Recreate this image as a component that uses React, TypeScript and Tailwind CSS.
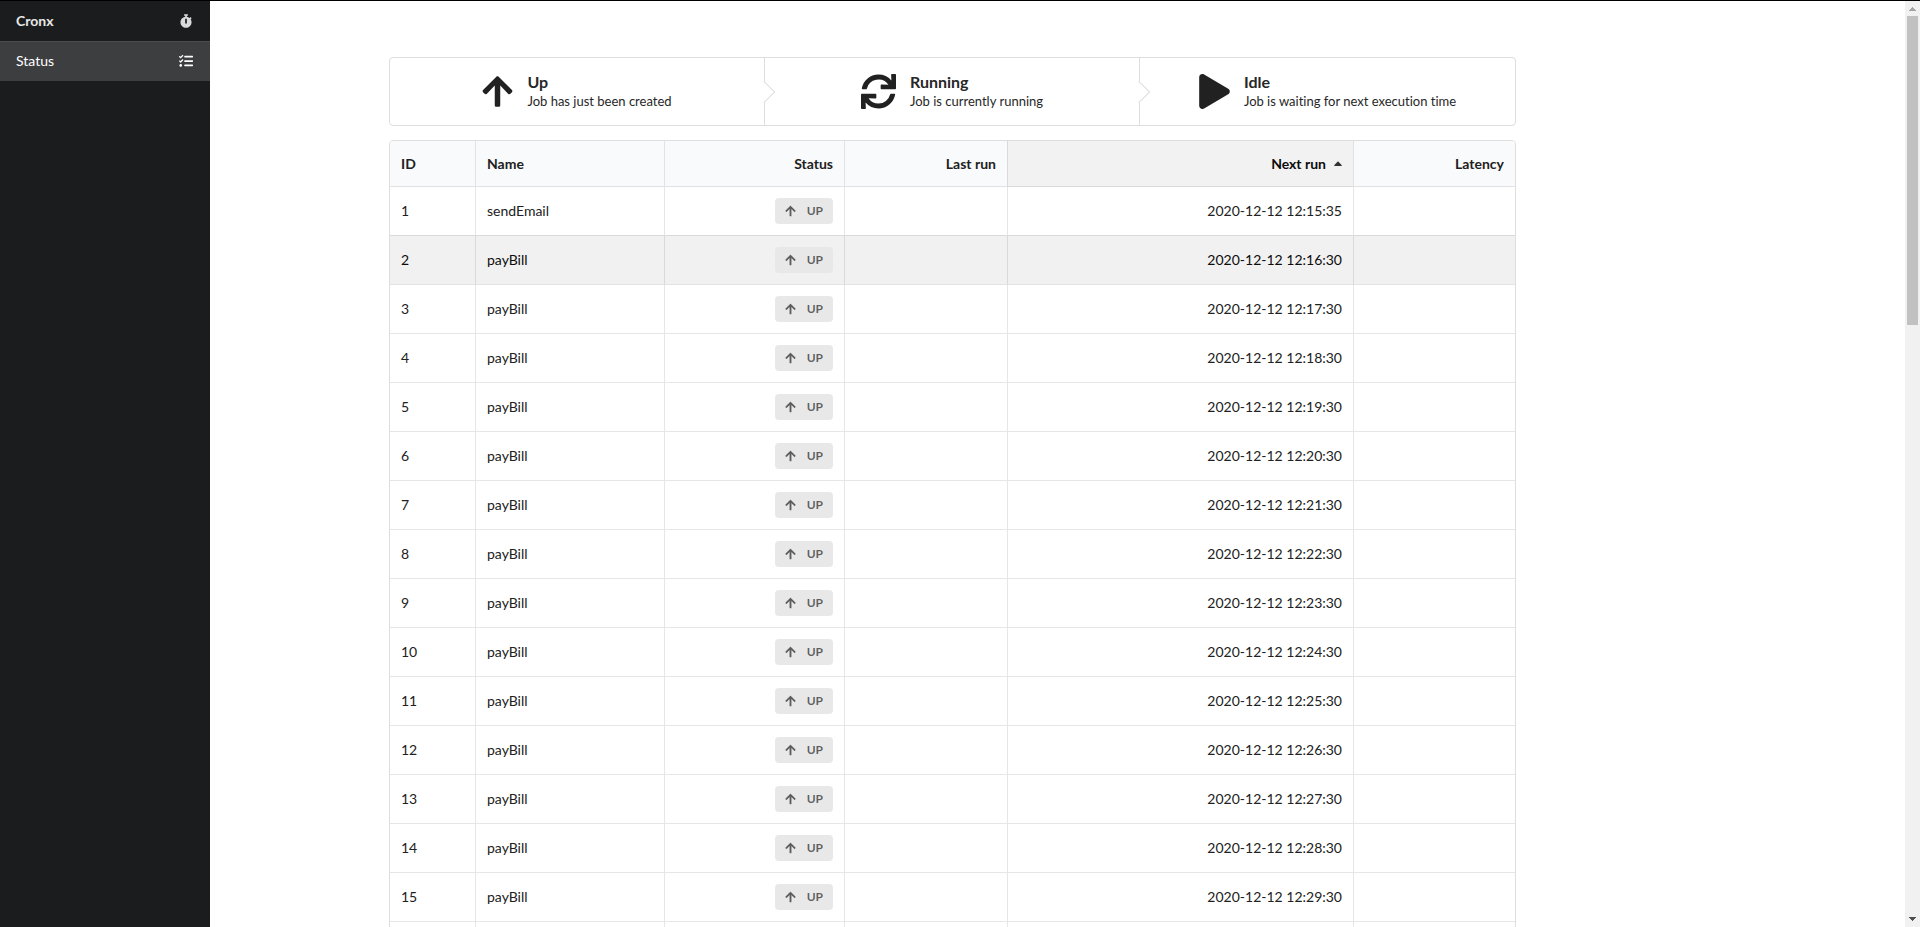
import React from "react";
import { FaArrowUp, FaPlay, FaStopwatch, FaSync, FaTasks } from "react-icons/fa";

type Job = { id: number; name: string; nextRun: string };

const jobs: Job[] = Array.from({ length: 15 }, (_, i) => ({
  id: i + 1,
  name: i === 0 ? "sendEmail" : "payBill",
  nextRun: i === 0 ? "2020-12-12 12:15:35" : `2020-12-12 12:${15 + i}:30`,
}));

const steps = [
  { title: "Up", text: "Job has just been created", icon: <FaArrowUp className="h-[35px] w-[31px]" /> },
  { title: "Running", text: "Job is currently running", icon: <FaSync className="h-[35px] w-[35px]" /> },
  { title: "Idle", text: "Job is waiting for next execution time", icon: <FaPlay className="h-[35px] w-[31px]" /> },
];

function Sidebar() {
  return (
    <nav className="w-[210px] shrink-0 bg-[#1b1c1d] text-sm leading-[14px]">
      <a href="#home" className="flex h-10 items-center justify-between px-4 font-bold text-white/90">
        Cronx
        <FaStopwatch className="mr-0.5 h-[14px] w-3 text-[#d9dada]" />
      </a>
      <a
        href="#status"
        aria-current="page"
        className="flex h-10 items-center justify-between border-t border-[#4b4c4d] bg-[#3d3e3f] px-4 pb-0.5 text-white"
      >
        Status
        <FaTasks className="mr-px h-[14px] w-[14px]" />
      </a>
    </nav>
  );
}

function Steps() {
  return (
    <ol className="grid grid-cols-3 rounded border border-[#dededf]">
      {steps.map((step, i) => (
        <li
          key={step.title}
          className="relative flex h-[67px] items-center justify-center gap-[14px] border-r border-[#dededf] text-[#212121] last:border-r-0"
        >
          {step.icon}
          <div className="pb-0.5 text-[#272727]">
            <div className="text-base leading-[18px] font-bold">{step.title}</div>
            <div className="mt-0.5 text-[13px] leading-4">{step.text}</div>
          </div>
          {i < steps.length - 1 && (
            <span className="absolute top-1/2 right-0 z-10 h-4 w-4 translate-x-1/2 -translate-y-1/2 -rotate-45 border-r border-b border-[#dededf] bg-white" />
          )}
        </li>
      ))}
    </ol>
  );
}

function StatusLabel() {
  return (
    <span className="inline-flex h-[26px] items-center gap-[11px] rounded bg-[#e8e8e8] px-[10px] align-middle text-xs leading-3 font-bold text-black/60">
      <FaArrowUp className="h-3 w-[11px]" />
      UP
    </span>
  );
}

const head = "border-b border-l border-[#e1e2e3] bg-[#f9fafb] px-[11px] font-bold first:border-l-0";

function JobTable() {
  return (
    <div className="overflow-hidden rounded border border-[#dededf]">
      <table className="w-full table-fixed border-separate border-spacing-0 text-right text-sm text-[#212121]">
        <colgroup>
          <col className="w-[85px]" />
          <col className="w-[189px]" />
          <col className="w-[180px]" />
          <col className="w-[163px]" />
          <col className="w-[346px]" />
          <col className="w-[162px]" />
        </colgroup>
        <thead>
          <tr className="h-[46px]">
            <th className={`${head} text-left`}>ID</th>
            <th className={`${head} text-left`}>Name</th>
            <th className={head}>Status</th>
            <th className={head}>Last run</th>
            <th aria-sort="ascending" className="border-b border-l border-[#dadada] bg-[#f2f2f2] px-[11px] font-bold text-[#0c0c0c]">
              <span className="inline-flex items-center gap-2">
                Next run
                <svg viewBox="0 0 8 5" className="h-[5px] w-2" fill="#333" aria-hidden="true">
                  <path d="M4 0.2 7.8 4.2Q8 5 7.2 5H0.8Q0 5 0.2 4.2Z" />
                </svg>
              </span>
            </th>
            <th className={head}>Latency</th>
          </tr>
        </thead>
        <tbody>
          {jobs.map((job) => (
            <tr
              key={job.id}
              className={
                job.id === 2
                  ? "h-[49px] bg-[#f1f1f1] text-[#0c0c0c] [&>td]:border-[#d9d9d9] [&>td]:border-b-[#e3e3e3]"
                  : job.id === 1
                    ? "h-[49px] [&>td]:border-[#e6e6e6] [&>td]:border-b-[#d9d9d9]"
                    : "h-[49px] [&>td]:border-[#e6e6e6]"
              }
            >
              <td className="border-b px-[11px] text-left">{job.id}</td>
              <td className="border-b border-l px-[11px] text-left">{job.name}</td>
              <td className="border-b border-l px-[11px]">
                <StatusLabel />
              </td>
              <td className="border-b border-l px-[11px]" />
              <td className="border-b border-l px-[11px]">{job.nextRun}</td>
              <td className="border-b border-l px-[11px]" />
            </tr>
          ))}
          <tr className="h-[49px] [&>td]:border-[#e6e6e6]">
            <td />
            <td className="border-l" />
            <td className="border-l" />
            <td className="border-l" />
            <td className="border-l" />
            <td className="border-l" />
          </tr>
        </tbody>
      </table>
    </div>
  );
}

function ScrollRail() {
  return (
    <div aria-hidden="true" className="flex w-[15px] shrink-0 flex-col items-center bg-[#f1f1f1]">
      <svg viewBox="0 0 15 15" className="h-[15px] w-[15px] shrink-0" fill="#a3a3a3" shapeRendering="crispEdges">
        <path d="M7 6h1v1h1v1h1v1h1v1H4V9h1V8h1V7h1z" />
      </svg>
      <div className="h-[309px] w-[11px] bg-[#c1c1c1]" />
      <svg viewBox="0 0 15 15" className="mt-auto h-[15px] w-[15px] shrink-0" fill="#505050" shapeRendering="crispEdges">
        <path d="M4 5h7v1h-1v1H9v1H8v1H7V8H6V7H5V6H4z" />
      </svg>
    </div>
  );
}

export default function App() {
  return (
    <div className="flex h-screen border-t border-black bg-white font-['Lato',sans-serif] [font-variant-ligatures:none]">
      <Sidebar />
      <main className="min-w-0 flex-1 overflow-y-auto pt-14 pr-[210px] [scrollbar-width:none]">
        <div className="mx-auto flex max-w-[1127px] flex-col gap-[14px]">
          <Steps />
          <JobTable />
        </div>
      </main>
      <ScrollRail />
    </div>
  );
}
